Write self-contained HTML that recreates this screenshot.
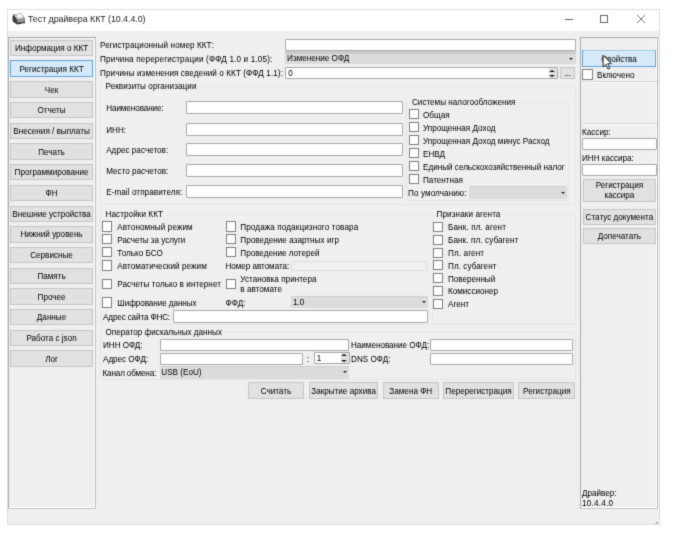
<!DOCTYPE html>
<html lang="ru"><head><meta charset="utf-8"><title>Тест драйвера ККТ</title><style>
html,body{margin:0;padding:0;background:#fff;}
body{width:674px;height:541px;position:relative;overflow:hidden;font-family:"Liberation Sans","DejaVu Sans",sans-serif;font-size:8.15px;color:#000;}
#page{position:absolute;left:0;top:0;width:674px;height:541px;background:#fff;filter:url(#soft);overflow:hidden;}
#win{position:absolute;left:7px;top:9px;width:653px;height:516px;background:#efeef0;box-shadow:inset 0 0 0 1px #dedede;}
#win>*{position:absolute;margin-left:-7px;margin-top:-9px;}
#title{left:8px;top:10px;width:651px;height:21.3px;background:#fff;}
.abs{position:absolute;}
.t{position:absolute;white-space:nowrap;line-height:12px;height:12px;}
.gl{background:#efeef0;}
.panel{box-sizing:border-box;border:1px solid #adadad;border-right-color:#bebebe;border-bottom-color:#c4c4c4;background:#efeef0;box-shadow:inset -1px -1px 0 #fff;}
.btn{box-sizing:border-box;border:1px solid #c6c6c6;background:#e1e1e1;display:flex;align-items:center;justify-content:center;text-align:center;white-space:nowrap;padding-top:1.2px;}
.btn.sel{background:#d6e9f8;border-color:#62a5dd;}
.btn.focus{border-top-style:dotted;}
.btn.two{line-height:10px;}
.btn.small{padding-top:0;}
.inp{position:absolute;box-sizing:border-box;border:1px solid #a9a9a9;border-radius:1px;background:#fff;}
.inp.dis{background:#efeef0;border-color:#dfdfdf;}
.inp .it{position:absolute;left:2px;top:50%;margin-top:-5.2px;line-height:12px;}
.sb{position:absolute;right:0;top:0;bottom:0;width:7.6px;background:#e2e2e2;}
.su,.sd{position:absolute;right:1.7px;width:0;height:0;border-left:3px solid transparent;border-right:3px solid transparent;}
.su{top:1.2px;border-bottom:2.6px solid #1a1a1a;}
.sd{bottom:1.2px;border-top:2.6px solid #1a1a1a;}
.combo{box-sizing:border-box;border:0 solid #d0d0d0;border-top-width:1px;background:#dcdcdc;}
.combo.top2{border-top:3px solid #cbcbcb;}
.combo.top2 i{right:3.3px;margin-top:-1px;}
.combo span{position:absolute;left:1.8px;top:50%;margin-top:-6px;line-height:12px;white-space:nowrap;}
.combo i{position:absolute;right:2.2px;top:50%;margin-top:-1.6px;width:0;height:0;border-left:2.3px solid transparent;border-right:2.3px solid transparent;border-top:2.7px solid #222;}
.cb{position:absolute;box-sizing:border-box;width:10.2px;height:10.2px;border:1px solid #808080;background:#fff;}
.grp{box-sizing:border-box;border:1px solid #e6e5e7;}
.hl{height:1px;background:#d6d6d6;border-bottom:1px solid #fafafa;}
</style></head><body>
<svg width="0" height="0" style="position:absolute"><filter id="soft" x="0" y="0" width="100%" height="100%" color-interpolation-filters="sRGB"><feConvolveMatrix order="3" kernelMatrix="0.0169 0.0962 0.0169 0.0962 0.5476 0.0962 0.0169 0.0962 0.0169" edgeMode="duplicate" preserveAlpha="true"/></filter></svg>
<div id="page"><div id="win">
<div id="title"></div>
<svg class="abs" style="left:12px;top:12.5px" width="14" height="12" viewBox="0 0 14 12">
<path d="M0.4 3.8 L1.4 1.5 L9.4 0.6 L12.7 5.2 L13 10.3 L5.2 11.5 L0.7 8.4 Z" fill="#3b3b3d"/>
<path d="M1.5 1.6 L9.3 0.7 L12.5 5.2 L5.3 7 Z" fill="#c4c4c6"/>
<path d="M5 1.4 L9.4 1.2 L10.9 4.3 L5.9 4.9 Z" fill="#fcfcfc"/>
<path d="M5.4 7.3 L12.6 5.5 L12.7 8.3 L5.4 9.4 Z" fill="#a39c9c"/>
<path d="M6.2 7.7 L10.6 6.7 L10.6 7.7 L6.2 8.7 Z" fill="#c9a48c"/>
<circle cx="10.7" cy="10" r="0.7" fill="#f4f4f4"/>
</svg>
<div class="t" style="left:28px;top:13.3px;font-size:8.9px;color:#222;letter-spacing:-0.051px;">Тест драйвера ККТ (10.4.4.0)</div>
<div class="abs" style="left:565px;top:18.8px;width:8px;height:1px;background:#666"></div>
<div class="abs" style="left:600px;top:14.8px;width:8.4px;height:8.2px;border:1px solid #666;box-sizing:border-box"></div>
<svg class="abs" style="left:636.4px;top:14.2px" width="10" height="10" viewBox="0 0 10 10"><path d="M1 1 L9 9 M9 1 L1 9" stroke="#666" stroke-width="0.9" fill="none"/></svg>
<div class="panel" style="left:8px;top:37px;width:88px;height:472px"></div>
<div class="btn " style="left:10.3px;top:40px;width:82.5px;height:16.3px"><span style="">Информация о ККТ</span></div>
<div class="btn sel" style="left:10px;top:60.49px;width:83.1px;height:16.8px"><span style="">Регистрация ККТ</span></div>
<div class="btn " style="left:10.3px;top:81.38px;width:82.5px;height:16.3px"><span style="">Чек</span></div>
<div class="btn " style="left:10.3px;top:102.07px;width:82.5px;height:16.3px"><span style="">Отчеты</span></div>
<div class="btn " style="left:10.3px;top:122.76px;width:82.5px;height:16.3px"><span style="">Внесения / выплаты</span></div>
<div class="btn " style="left:10.3px;top:143.45px;width:82.5px;height:16.3px"><span style="">Печать</span></div>
<div class="btn " style="left:10.3px;top:164.14px;width:82.5px;height:16.3px"><span style="">Программирование</span></div>
<div class="btn " style="left:10.3px;top:184.83px;width:82.5px;height:16.3px"><span style="">ФН</span></div>
<div class="btn " style="left:10.3px;top:205.52px;width:82.5px;height:16.3px"><span style="">Внешние устройства</span></div>
<div class="btn " style="left:10.3px;top:226.21px;width:82.5px;height:16.3px"><span style="">Нижний уровень</span></div>
<div class="btn " style="left:10.3px;top:246.9px;width:82.5px;height:16.3px"><span style="">Сервисные</span></div>
<div class="btn " style="left:10.3px;top:267.59px;width:82.5px;height:16.3px"><span style="">Память</span></div>
<div class="btn " style="left:10.3px;top:288.28px;width:82.5px;height:16.3px"><span style="">Прочее</span></div>
<div class="btn " style="left:10.3px;top:308.97px;width:82.5px;height:16.3px"><span style="">Данные</span></div>
<div class="btn " style="left:10.3px;top:329.66px;width:82.5px;height:16.3px"><span style="">Работа с json</span></div>
<div class="btn " style="left:10.3px;top:350.35px;width:82.5px;height:16.3px"><span style="">Лог</span></div>
<div class="t " style="left:100px;top:40px;letter-spacing:0.084px;">Регистрационный номер ККТ:</div>
<div class="inp" style="left:285.3px;top:38.8px;width:291px;height:11.8px"></div>
<div class="t " style="left:100px;top:54px;letter-spacing:0.160px;">Причина перерегистрации (ФФД 1.0 и 1.05):</div>
<div class="combo top2" style="left:285.3px;top:50.8px;width:291px;height:13.6px"><span>Изменение ОФД</span><i></i></div>
<div class="t " style="left:100px;top:68.2px;letter-spacing:0.086px;">Причины изменения сведений о ККТ (ФФД 1.1):</div>
<div class="inp" style="left:285.3px;top:67.4px;width:272.6px;height:11.4px"><span class="it">0</span><b class="sb"></b><b class="su"></b><b class="sd"></b></div>
<div class="btn small" style="left:560.1px;top:67.4px;width:15.1px;height:11.4px"><span style="">...</span></div>
<div class="grp" style="left:99.5px;top:85.7px;width:476.5px;height:119.8px"></div>
<div class="t gl" style="left:103.5px;top:80.9px;padding:0 2px;letter-spacing:0.075px;">Реквизиты организации</div>
<div class="t " style="left:106.2px;top:102.5px;letter-spacing:-0.084px;">Наименование:</div>
<div class="inp" style="left:186.3px;top:100.5px;width:216.9px;height:13.2px"></div>
<div class="t " style="left:106.2px;top:125px;">ИНН:</div>
<div class="inp" style="left:186.3px;top:122.7px;width:216.9px;height:13.2px"></div>
<div class="t " style="left:106.2px;top:145px;letter-spacing:0.018px;">Адрес расчетов:</div>
<div class="inp" style="left:186.3px;top:143.2px;width:216.9px;height:13.2px"></div>
<div class="t " style="left:106.2px;top:165.8px;">Место расчетов:</div>
<div class="inp" style="left:186.3px;top:163.8px;width:216.9px;height:13.2px"></div>
<div class="t " style="left:106.2px;top:187px;letter-spacing:0.067px;">E-mail отправителя:</div>
<div class="inp" style="left:186.3px;top:184.6px;width:216.9px;height:13.2px"></div>
<div class="grp" style="left:406px;top:102px;width:162.7px;height:98.8px"></div>
<div class="t gl" style="left:410px;top:97.2px;padding:0 2px;">Системы налогообложения</div>
<div class="cb" style="left:408.6px;top:109.2px"></div>
<div class="t " style="left:423px;top:109.7px;">Общая</div>
<div class="cb" style="left:408.6px;top:122.2px"></div>
<div class="t " style="left:423px;top:122.7px;">Упрощенная Доход</div>
<div class="cb" style="left:408.6px;top:135.2px"></div>
<div class="t " style="left:423px;top:135.7px;">Упрощенная Доход минус Расход</div>
<div class="cb" style="left:408.6px;top:148.2px"></div>
<div class="t " style="left:423px;top:148.7px;">ЕНВД</div>
<div class="cb" style="left:408.6px;top:161.2px"></div>
<div class="t " style="left:423px;top:161.7px;">Единый сельскохозяйственный налог</div>
<div class="cb" style="left:408.6px;top:174.2px"></div>
<div class="t " style="left:423px;top:174.7px;">Патентная</div>
<div class="t " style="left:408px;top:188px;letter-spacing:0.099px;">По умолчанию:</div>
<div class="combo " style="left:468.5px;top:186.3px;width:98.8px;height:12.6px"><span></span><i></i></div>
<div class="grp" style="left:99.5px;top:213.8px;width:476.5px;height:111px"></div>
<div class="t gl" style="left:103.5px;top:209px;padding:0 2px;letter-spacing:0.075px;">Настройки ККТ</div>
<div class="cb" style="left:102.2px;top:221.4px"></div>
<div class="t " style="left:117.3px;top:221.9px;letter-spacing:0.098px;">Автономный режим</div>
<div class="cb" style="left:102.2px;top:234.2px"></div>
<div class="t " style="left:117.3px;top:234.7px;letter-spacing:-0.046px;">Расчеты за услуги</div>
<div class="cb" style="left:102.2px;top:247.2px"></div>
<div class="t " style="left:117.3px;top:247.7px;letter-spacing:0.019px;">Только БСО</div>
<div class="cb" style="left:102.2px;top:260.4px"></div>
<div class="t " style="left:117.3px;top:260.9px;letter-spacing:0.070px;">Автоматический режим</div>
<div class="cb" style="left:102.2px;top:278.7px"></div>
<div class="t " style="left:117.3px;top:279.2px;letter-spacing:0.067px;">Расчеты только в интернет</div>
<div class="cb" style="left:102.2px;top:297.4px"></div>
<div class="t " style="left:117.3px;top:297.9px;letter-spacing:-0.070px;">Шифрование данных</div>
<div class="cb" style="left:225.6px;top:221.4px"></div>
<div class="t " style="left:240.3px;top:221.9px;letter-spacing:0.106px;">Продажа подакцизного товара</div>
<div class="cb" style="left:225.6px;top:234.2px"></div>
<div class="t " style="left:240.3px;top:234.7px;letter-spacing:0.035px;">Проведение азартных игр</div>
<div class="cb" style="left:225.6px;top:247.2px"></div>
<div class="t " style="left:240.3px;top:247.7px;letter-spacing:-0.011px;">Проведение лотерей</div>
<div class="t " style="left:225.5px;top:261px;letter-spacing:-0.047px;">Номер автомата:</div>
<div class="inp dis" style="left:291.2px;top:260.7px;width:136.8px;height:10.3px"></div>
<div class="cb" style="left:225.6px;top:278.7px"></div>
<div class="t" style="left:240.3px;top:274.6px;line-height:10.5px;letter-spacing:0.022px;">Установка принтера<br>в автомате</div>
<div class="t " style="left:225.5px;top:298px;letter-spacing:0.085px;">ФФД:</div>
<div class="combo " style="left:291.2px;top:296.1px;width:136.8px;height:12.2px"><span>1.0</span><i></i></div>
<div class="t " style="left:103px;top:311.8px;letter-spacing:-0.139px;">Адрес сайта ФНС:</div>
<div class="inp" style="left:172.5px;top:310.4px;width:255.5px;height:12.4px"></div>
<div class="grp" style="left:432px;top:213.8px;width:143.5px;height:110px"></div>
<div class="t gl" style="left:434.5px;top:209px;padding:0 2px;letter-spacing:0.104px;">Признаки агента</div>
<div class="cb" style="left:433.3px;top:221.9px"></div>
<div class="t " style="left:448px;top:222.4px;letter-spacing:0.127px;">Банк. пл. агент</div>
<div class="cb" style="left:433.3px;top:234.7px"></div>
<div class="t " style="left:448px;top:235.2px;letter-spacing:0.095px;">Банк. пл. субагент</div>
<div class="cb" style="left:433.3px;top:247.5px"></div>
<div class="t " style="left:448px;top:248px;letter-spacing:0.118px;">Пл. агент</div>
<div class="cb" style="left:433.3px;top:260.3px"></div>
<div class="t " style="left:448px;top:260.8px;letter-spacing:0.057px;">Пл. субагент</div>
<div class="cb" style="left:433.3px;top:273.1px"></div>
<div class="t " style="left:448px;top:273.6px;letter-spacing:-0.030px;">Поверенный</div>
<div class="cb" style="left:433.3px;top:285.9px"></div>
<div class="t " style="left:448px;top:286.4px;letter-spacing:-0.009px;">Комиссионер</div>
<div class="cb" style="left:433.3px;top:298.7px"></div>
<div class="t " style="left:448px;top:299.2px;">Агент</div>
<div class="grp" style="left:99.5px;top:331.5px;width:476.5px;height:48.6px"></div>
<div class="t gl" style="left:103.5px;top:326.7px;padding:0 2px;letter-spacing:0.007px;">Оператор фискальных данных</div>
<div class="t " style="left:103px;top:340px;letter-spacing:-0.041px;">ИНН ОФД:</div>
<div class="inp" style="left:159.5px;top:338.8px;width:189.8px;height:12.4px"></div>
<div class="t " style="left:351px;top:340px;letter-spacing:-0.022px;">Наименование ОФД:</div>
<div class="inp" style="left:430.3px;top:338.8px;width:143.2px;height:12.4px"></div>
<div class="t " style="left:103px;top:353.8px;letter-spacing:-0.032px;">Адрес ОФД:</div>
<div class="inp" style="left:159.5px;top:352.5px;width:143px;height:12px"></div>
<div class="t " style="left:307px;top:353.8px;">:</div>
<div class="inp" style="left:313.7px;top:352.3px;width:36px;height:11.9px"><span class="it">1</span><b class="sb"></b><b class="su"></b><b class="sd"></b></div>
<div class="t " style="left:351px;top:353.8px;letter-spacing:0.012px;">DNS ОФД:</div>
<div class="inp" style="left:430.3px;top:352.5px;width:143.2px;height:12px"></div>
<div class="t " style="left:102.5px;top:368px;letter-spacing:-0.148px;">Канал обмена:</div>
<div class="combo " style="left:159.5px;top:366.1px;width:189.8px;height:12.5px"><span>USB (EoU)</span><i></i></div>
<div class="btn " style="left:247.5px;top:382.4px;width:56.8px;height:17px"><span style="">Считать</span></div>
<div class="btn " style="left:309.2px;top:382.4px;width:68.8px;height:17px"><span style="">Закрытие архива</span></div>
<div class="btn " style="left:382.6px;top:382.4px;width:56.4px;height:17px"><span style="">Замена ФН</span></div>
<div class="btn " style="left:443.4px;top:382.4px;width:70.2px;height:17px"><span style="">Перерегистрация</span></div>
<div class="btn " style="left:518.4px;top:382.4px;width:56.9px;height:17px"><span style="">Регистрация</span></div>
<div class="panel" style="left:580px;top:37px;width:78px;height:472px"></div>
<div class="hl" style="left:581.5px;top:81.2px;width:75.2px"></div>
<div class="hl" style="left:581.5px;top:123.2px;width:75.2px"></div>
<div class="btn sel focus" style="left:582.1px;top:50.4px;width:73.8px;height:16.4px"><span style="">Свойства</span></div>
<div class="cb" style="left:582.4px;top:69.4px"></div>
<div class="t " style="left:597px;top:69.9px;">Включено</div>
<div class="t " style="left:582px;top:127px;">Кассир:</div>
<div class="inp" style="left:581.8px;top:138px;width:75.2px;height:12px"></div>
<div class="t " style="left:582px;top:152.6px;letter-spacing:-0.029px;">ИНН кассира:</div>
<div class="inp" style="left:581.8px;top:163.8px;width:75.2px;height:12.4px"></div>
<div class="btn two" style="left:582.6px;top:178.8px;width:73.6px;height:23.6px"><span style="">Регистрация<br>кассира</span></div>
<div class="btn " style="left:582.6px;top:208.6px;width:73.6px;height:16px"><span style="">Статус документа</span></div>
<div class="btn " style="left:582.6px;top:228px;width:73.6px;height:16.3px"><span style="">Допечатать</span></div>
<div class="t " style="left:582px;top:488px;">Драйвер:</div>
<div class="t " style="left:582px;top:497.8px;letter-spacing:0.228px;">10.4.4.0</div>
<svg class="abs" style="left:601.6px;top:54.2px" width="10.8" height="17.3" viewBox="0 0 10 16"><path d="M1 1 L1 12 L3.6 9.6 L5.6 14 L7.2 13.2 L5.2 9 L8.6 9 Z" fill="#fff" stroke="#222" stroke-width="0.9"/></svg>
<div class="abs" style="left:656.2px;top:521.8px;width:1.5px;height:1.5px;background:#9a9a9a"></div><div class="abs" style="left:654.2px;top:523px;width:1.2px;height:1.2px;background:#c4c4c4"></div><div class="abs" style="left:656.4px;top:523.2px;width:1.2px;height:1.2px;background:#c4c4c4"></div>
</div></div>
</body></html>
